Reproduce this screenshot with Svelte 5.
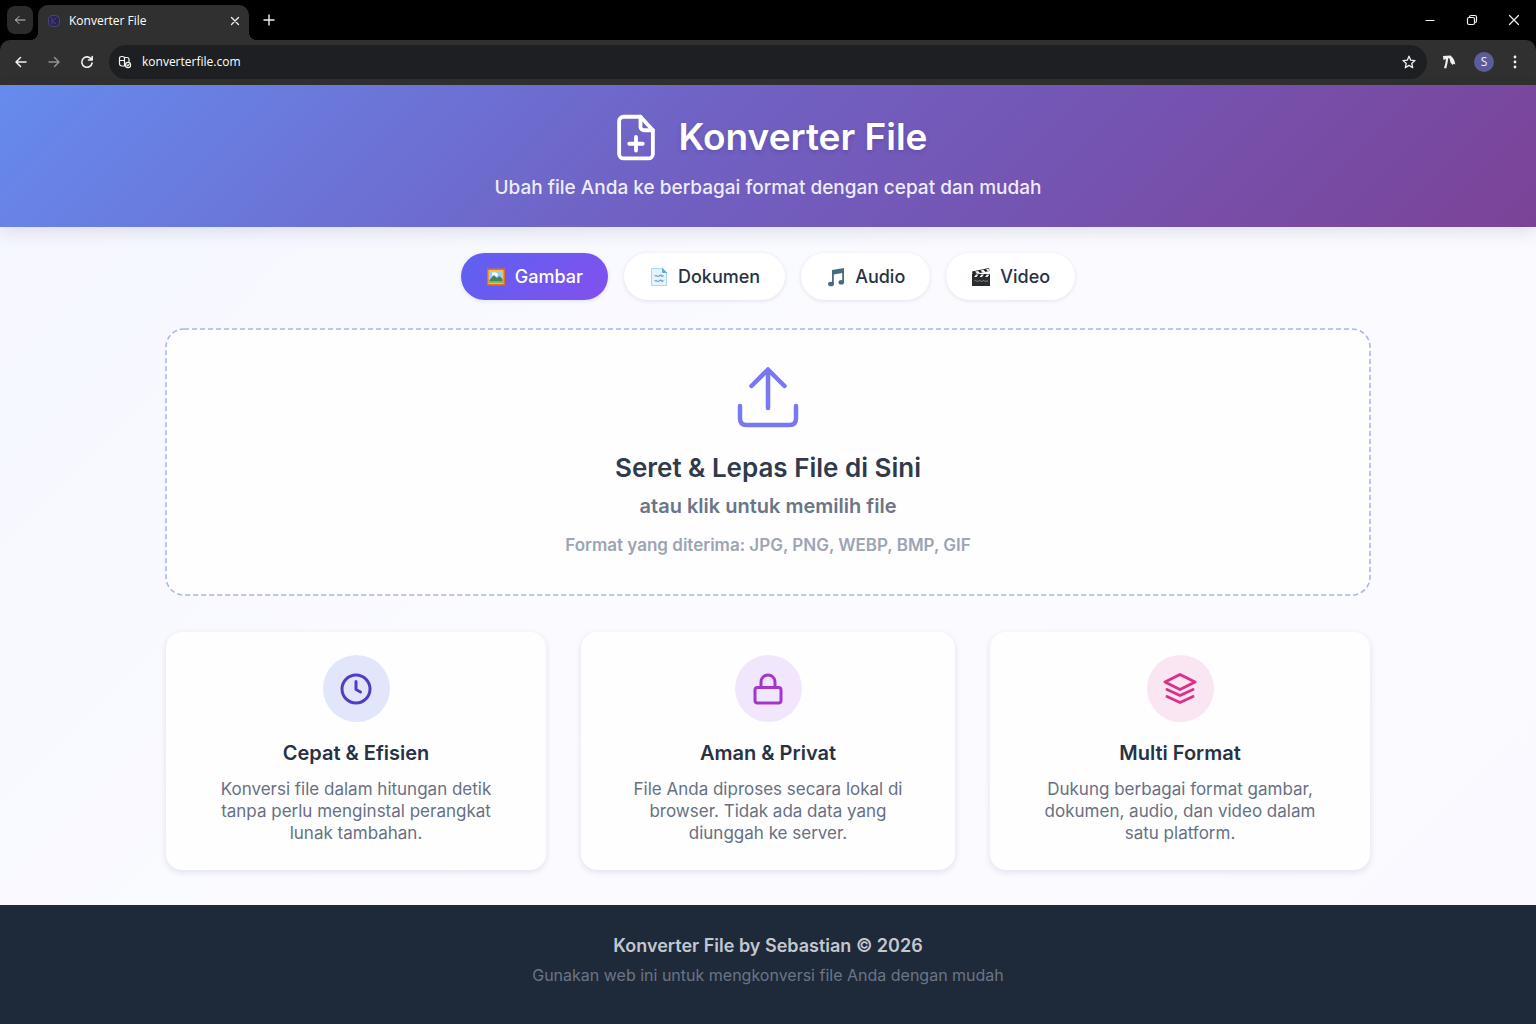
<script lang="ts">
  type Category = {
    id: string;
    label: string;
    formats: string[];
  };

  const categories: Category[] = [
    { id: "image", label: "Gambar", formats: ["JPG", "PNG", "WEBP", "BMP", "GIF"] },
    { id: "document", label: "Dokumen", formats: ["PDF", "DOCX", "TXT"] },
    { id: "audio", label: "Audio", formats: ["MP3", "WAV", "OGG"] },
    { id: "video", label: "Video", formats: ["MP4", "WEBM", "AVI"] },
  ];

  const features = [
    {
      icon: "clock",
      title: "Cepat & Efisien",
      text: "Konversi file dalam hitungan detik tanpa perlu menginstal perangkat lunak tambahan.",
    },
    {
      icon: "lock",
      title: "Aman & Privat",
      text: "File Anda diproses secara lokal di browser. Tidak ada data yang diunggah ke server.",
    },
    {
      icon: "layers",
      title: "Multi Format",
      text: "Dukung berbagai format gambar, dokumen, audio, dan video dalam satu platform.",
    },
  ];

  let active = $state("image");
  let url = $state("konverterfile.com");

  const current = $derived(categories.find((c) => c.id === active) ?? categories[0]);
</script>

<div class="browser">
  <div class="tab-bar">
    <button class="tab-search" aria-label="Cari tab">
      <svg width="12" height="12" viewBox="0 0 12 12"><path d="M11 6H1.5M5 2.5 1.5 6 5 9.500" /></svg>
    </button>
    <div class="tab">
      <svg class="favicon" width="14" height="14" viewBox="0 0 14 14">
        <rect x="1.5" y="1.5" width="11" height="11" rx="4" />
        <path d="M5 4v6M9 4 5.5 7 9 10" />
      </svg>
      <span class="tab-title">Konverter File</span>
      <button class="bare" aria-label="Tutup tab">
        <svg width="10" height="10" viewBox="0 0 10 10" stroke-width="1.3"><path d="m1.5 1.5 7 7M8.5 1.5l-7 7" /></svg>
      </button>
    </div>
    <button class="bare new-tab" aria-label="Tab baru">
      <svg width="12" height="12" viewBox="0 0 12 12" stroke-width="1.4"><path d="M6 1v10M1 6h10" /></svg>
    </button>
    <div class="window-controls">
      <button class="bare" aria-label="Minimalkan">
        <svg width="12" height="12" viewBox="0 0 12 12" stroke-width="1.2"><path d="M2 6.5h8" /></svg>
      </button>
      <button class="bare" aria-label="Pulihkan">
        <svg width="12" height="12" viewBox="0 0 12 12" stroke-width="1.2">
          <rect x="1.5" y="3.5" width="7" height="7" rx="1.5" />
          <path d="M3.5 3.5V3q0-1.5 1.500-1.500h4q1.500 0 1.500 1.500v4q0 1.500-1.500 1.500h-.5" />
        </svg>
      </button>
      <button class="bare" aria-label="Tutup">
        <svg width="12" height="12" viewBox="0 0 12 12" stroke-width="1.2"><path d="m1.5 1.5 9 9M10.5 1.5l-9 9" /></svg>
      </button>
    </div>
  </div>

  <div class="toolbar">
    <button class="bare" aria-label="Kembali">
      <svg width="14" height="14" viewBox="0 0 14 14" stroke-width="1.5"><path d="M12 7H2M6.500 2.500 2 7l4.500 4.500" /></svg>
    </button>
    <button class="bare dim" aria-label="Maju">
      <svg width="14" height="14" viewBox="0 0 14 14" stroke-width="1.5"><path d="M2 7h10M7.500 2.500 12 7l-4.500 4.500" /></svg>
    </button>
    <button class="bare" aria-label="Muat ulang">
      <svg width="14" height="14" viewBox="0 0 14 14" stroke-width="1.6">
        <path d="M11.500 4.500A5.200 5.200 0 1 0 12.100 8M12.200 1.500v3.500H8.500" />
      </svg>
    </button>
    <div class="address">
      <svg width="14" height="14" viewBox="0 0 14 14" stroke-width="1.2">
        <path d="M6.500 11H4Q1.500 11 1.500 8.500V3.500Q1.500 1.500 3.500 1.500h1q2 0 2 2V11M1.500 5.500h5M6.500 2.500H9q2 0 2 2V7" />
        <circle cx="10" cy="10" r="2.6" />
        <path d="m9 10 .8.8 1.300-1.500" />
      </svg>
      <input type="text" aria-label="Alamat" bind:value={url} />
      <button class="bare" aria-label="Tandai halaman">
        <svg width="14" height="14" viewBox="0 0 14 14" stroke-width="1.3">
          <path d="m7 1.200 1.700 4 4.300.4-3.300 2.800 1 4.300L7 10.400l-3.700 2.300 1-4.300L1 5.600l4.300-.4z" />
        </svg>
      </button>
    </div>
    <button class="bare" aria-label="Ekstensi">
      <svg class="solid" width="14" height="14" viewBox="0 0 14 14">
        <path d="M1 1 8.500.5l2.500 2.500 1.500 3 .8 3.500-1.600-.8L10.500 10 8.500 7.500 7.500 3.500 6.300 3 5.500 8 4.300 13.200H2L3.300 8.500 4 4 1.500 5z" />
      </svg>
    </button>
    <button class="avatar" aria-label="Profil S">S</button>
    <button class="bare" aria-label="Menu">
      <svg class="solid" width="4" height="14" viewBox="0 0 4 14">
        <circle cx="2" cy="2" r="1.4" /><circle cx="2" cy="7" r="1.4" /><circle cx="2" cy="12" r="1.4" />
      </svg>
    </button>
  </div>
</div>

<div class="page">
  <header>
    <div class="brand">
      <svg width="54" height="54" viewBox="0 0 24 24">
        <path d="M12 12v6M9 15h6" />
        <path d="M14 3H6.500a2 2 0 0 0-2 2v14.500a2 2 0 0 0 2 2h11a2 2 0 0 0 2-2V9z" />
        <path d="M14 3v4.500A1.500 1.500 0 0 0 15.500 9h4" />
      </svg>
      <h1>Konverter File</h1>
    </div>
    <p>Ubah file Anda ke berbagai format dengan cepat dan mudah</p>
  </header>

  <main>
    <nav aria-label="Kategori">
      {#each categories as category (category.id)}
        <button class="pill" class:active={active === category.id} onclick={() => (active = category.id)}>
          {#if category.id === "image"}
            <svg width="20" height="20" viewBox="0 0 20 20">
              <rect x="1" y="1.5" width="18" height="17" fill="#ef6c13" />
              <rect x="2.5" y="3" width="15" height="14" fill="#ffbd45" />
              <rect x="3.5" y="4" width="13" height="12" fill="#8fd3ee" />
              <path d="M6 5.500h4l2 2-1 2-3 .5-2-2z" fill="#fff" />
              <path d="M3.500 13 8 8l3 3 2.500-2 3 3v4h-13z" fill="#458265" />
              <path d="M3.500 14h13v2h-13z" fill="#84b848" />
            </svg>
          {:else if category.id === "document"}
            <svg width="20" height="20" viewBox="0 0 20 20">
              <path d="M2.500 1.500h11l4 4v13h-15z" fill="#e5f3fc" stroke="#add7ee" />
              <path d="M13.500 1.500v4h4z" fill="#68a7d2" stroke="#68a7d2" />
              <path d="M5.500 9q1.500-.8 2.500 0t2.500-.3 2 .3h2M5.500 14q1.500-.8 2.500 0t2.500-.3 2 .3h2" fill="none" stroke="#69a4cf" stroke-width="1.3" />
            </svg>
          {:else if category.id === "audio"}
            <svg width="20" height="20" viewBox="0 0 20 20" fill="#486b80">
              <path d="M6 3 18 1v14h-1.800V6L7.800 7.500V17H6z" />
              <ellipse cx="5" cy="17" rx="3" ry="2.3" />
              <ellipse cx="15.3" cy="15.3" rx="2.8" ry="2.3" />
            </svg>
          {:else}
            <svg width="20" height="20" viewBox="0 0 20 20">
              <path d="M1 7h18v12H1z" fill="#292d30" />
              <path d="M1 7h18v3H1zM1 4.500 18 1l.6 3L1.600 7.500z" fill="#202427" />
              <path d="m4 4.500 3-.6L9 6l-3 .6zM9.500 3.300l3-.6L14.500 5l-3 .6zM15 2.200l2.600-.5.8 2.300-1.400.3zM3 10l2-2.500h2.500l-2 2.500zM8.500 10l2-2.500H13L11 10zM14 10l2-2.500h2.500l-2 2.500z" fill="#f4f4f4" />
              <path d="M3.500 14q1-1 2 0t2 0 2 0 2 0 2 0 2 0h1.500" fill="none" stroke="#8e9498" />
            </svg>
          {/if}
          {category.label}
        </button>
      {/each}
    </nav>

    <label class="dropzone">
      <svg class="outline" width="100%" height="100%" aria-hidden="true">
        <rect width="100%" height="100%" rx="18" />
      </svg>
      <input type="file" class="file-input" multiple />
      <svg class="upload" width="64" height="64" viewBox="0 0 64 64">
        <path d="M32 43V5M15.500 21 32 4.500 48.500 21M4 41v12.500q0 6.500 6.500 6.500h43q6.500 0 6.500-6.500V41" />
      </svg>
      <span class="drop-title">Seret &amp; Lepas File di Sini</span>
      <span class="drop-hint">atau klik untuk memilih file</span>
      <span class="drop-formats">Format yang diterima: {current.formats.join(", ")}</span>
    </label>

    <section class="features">
      {#each features as feature (feature.icon)}
        <article class="card">
          <div class="badge {feature.icon}">
            <svg width="36" height="36" viewBox="0 0 36 36">
              {#if feature.icon === "clock"}
                <circle cx="18" cy="18" r="14" />
                <path d="M18 10.500v8l4.500 2.500" />
              {:else if feature.icon === "lock"}
                <rect x="5" y="16.5" width="26" height="15.5" rx="2.5" />
                <path d="M11 16.500V11a7 7 0 0 1 14 0v5.500" />
              {:else}
                <path d="M18 3.500 33 11l-15 7.500L3 11z" />
                <path d="m5 18.500 13 6 13-6M5 25.500l13 6 13-6" />
              {/if}
            </svg>
          </div>
          <h2>{feature.title}</h2>
          <p>{feature.text}</p>
        </article>
      {/each}
    </section>
  </main>

  <footer>
    <p class="credit">Konverter File by Sebastian © 2026</p>
    <p class="note">Gunakan web ini untuk mengkonversi file Anda dengan mudah</p>
  </footer>
</div>

<style>
  :global(body) {
    margin: 0;
    background: #1e293a;
  }

  :global(#app) {
    display: flex;
    flex-direction: column;
    min-height: 100vh;
  }

  button {
    font: inherit;
    color: inherit;
    border: none;
    cursor: pointer;
  }

  h1,
  h2,
  p {
    margin: 0;
  }

  /* BROWSER */
  .browser {
    background: #000;
    color: #f1f1f1;
    font-family: "Open Sans", sans-serif;
    font-size: 12px;
  }

  .browser svg {
    display: block;
    fill: none;
    stroke: currentColor;
    stroke-linecap: round;
    stroke-linejoin: round;
  }

  .browser svg.solid {
    fill: currentColor;
    stroke: none;
  }

  .bare {
    display: flex;
    background: none;
    padding: 0;
  }

  .dim {
    color: #919191;
  }

  .tab-bar {
    display: flex;
    align-items: center;
    height: 40px;
    padding: 0 16px 0 7px;
  }

  .tab-search {
    display: grid;
    place-items: center;
    width: 26px;
    height: 28px;
    padding: 0;
    border-radius: 8px;
    background: #2b2b2b;
    color: #c4c4c4;
  }

  .tab {
    position: relative;
    box-sizing: border-box;
    display: flex;
    align-items: center;
    align-self: flex-end;
    width: 211px;
    height: 35px;
    margin-left: 5px;
    padding: 0 9px 4px;
    border-radius: 10px 10px 0 0;
    background: #303030;
  }

  /* flared feet of the tab */
  .tab::before,
  .tab::after {
    content: "";
    position: absolute;
    bottom: 0;
    width: 8px;
    height: 8px;
  }

  .tab::before {
    right: 100%;
    background: radial-gradient(circle at 0 0, transparent 8px, #303030 8px);
  }

  .tab::after {
    left: 100%;
    background: radial-gradient(circle at 100% 0, transparent 8px, #303030 8px);
  }

  .browser svg.favicon {
    stroke: #4b438b;
    fill: #28264a;
  }

  .tab-title {
    flex: 1;
    margin-left: 8px;
    color: #fff;
  }

  .new-tab {
    margin-left: 14px;
  }

  .window-controls {
    display: flex;
    gap: 30px;
    margin-left: auto;
  }

  .toolbar {
    display: flex;
    align-items: center;
    height: 43px;
    padding: 0 19px 2px 14px;
    gap: 19px;
    border-radius: 10px 10px 0 0;
    background: #303030;
  }

  .address {
    flex: 1;
    display: flex;
    align-items: center;
    height: 34px;
    margin-left: -4px;
    margin-right: -4px;
    padding: 0 11px 0 9px;
    border-radius: 17px;
    background: #1d1f22;
  }

  .address input {
    flex: 1;
    min-width: 0;
    margin-left: 10px;
    padding: 0;
    border: none;
    outline: none;
    background: none;
    color: #fff;
    font: inherit;
  }

  .avatar {
    width: 20px;
    height: 20px;
    margin-left: -1px;
    padding: 0;
    border-radius: 50%;
    background: #5c5c9a;
    line-height: 20px;
  }

  /* PAGE */
  .page {
    flex: 1;
    display: flex;
    flex-direction: column;
    font-family: Inter, sans-serif;
    text-align: center;
    background: linear-gradient(135deg, #f5f7ff 0%, #fbfbff 50%, #f9f9ff 100%);
  }

  header {
    padding: 24px 24px 27px;
    color: #fff;
    background: linear-gradient(135deg, #668bee 0%, #7061c3 45%, #7553b0 70%, #7b4397 100%);
    box-shadow: 0 6px 16px rgba(40, 40, 90, 0.12);
  }

  .brand {
    display: flex;
    align-items: center;
    justify-content: center;
    gap: 16px;
  }

  .brand svg {
    fill: none;
    stroke: currentColor;
    stroke-width: 1.7;
    stroke-linecap: round;
    stroke-linejoin: round;
  }

  h1 {
    font-size: 37px;
    font-weight: 600;
    line-height: 56px;
    text-shadow: 0 2px 4px rgba(40, 30, 100, 0.2);
  }

  header p {
    margin-top: 11px;
    font-size: 19px;
    font-weight: 500;
    line-height: 24px;
    color: #eeecfb;
  }

  main {
    width: calc(100% - 48px);
    max-width: 1204px;
    margin: 0 auto;
    padding: 26px 0 35px;
  }

  nav {
    display: flex;
    flex-wrap: wrap;
    justify-content: center;
    gap: 16px;
  }

  .pill {
    display: flex;
    align-items: center;
    gap: 9px;
    height: 47px;
    padding: 0 25px;
    border-radius: 24px;
    background: #fff;
    color: #273244;
    font-size: 18px;
    font-weight: 500;
    box-shadow: 0 1px 4px rgba(40, 50, 90, 0.12);
  }

  .pill.active {
    color: #fff;
    background: linear-gradient(135deg, #5d61f1, #8350ee);
  }

  .dropzone {
    position: relative;
    display: flex;
    flex-direction: column;
    align-items: center;
    margin-top: 29px;
    padding: 36px 24px 38px;
    border-radius: 18px;
    background: #fefeff;
    cursor: pointer;
  }

  .outline {
    position: absolute;
    inset: 0;
    overflow: visible;
    fill: none;
    stroke: #a5b4f4;
    stroke-width: 1.5;
    stroke-dasharray: 5 3;
  }

  .file-input {
    position: absolute;
    inset: 0;
    width: 100%;
    opacity: 0;
    cursor: pointer;
  }

  .upload {
    fill: none;
    stroke: #7778f2;
    stroke-width: 4.5;
    stroke-linecap: round;
    stroke-linejoin: round;
  }

  .drop-title {
    margin-top: 23px;
    font-size: 26px;
    font-weight: 600;
    line-height: 32px;
    color: #303a4b;
  }

  .drop-hint {
    margin-top: 8px;
    font-size: 20px;
    font-weight: 600;
    line-height: 28px;
    color: #6b7588;
  }

  .drop-formats {
    margin-top: 13px;
    font-size: 17px;
    font-weight: 600;
    line-height: 24px;
    color: #9da4b2;
  }

  .features {
    display: grid;
    grid-template-columns: 380fr 374fr 380fr;
    gap: 35px;
    margin-top: 37px;
  }

  .card {
    display: flex;
    flex-direction: column;
    align-items: center;
    padding: 23px 48px 26px;
    border-radius: 16px;
    background: #fefeff;
    box-shadow: 0 2px 6px rgba(40, 50, 90, 0.13);
  }

  .badge {
    display: grid;
    place-items: center;
    width: 67px;
    height: 67px;
    border-radius: 50%;
  }

  .badge svg {
    fill: none;
    stroke: currentColor;
    stroke-width: 3;
    stroke-linecap: round;
    stroke-linejoin: round;
  }

  .clock {
    color: #503fc5;
    background: #e1e6fb;
  }

  .lock {
    color: #a138cb;
    background: #f2e6fc;
  }

  .layers {
    color: #d93289;
    background: #fae5f2;
  }

  h2 {
    margin-top: 19px;
    font-size: 20px;
    font-weight: 600;
    line-height: 24px;
    color: #273244;
  }

  .card p {
    max-width: 290px;
    margin-top: 13px;
    font-size: 17px;
    line-height: 22px;
    color: #677083;
  }

  footer {
    flex: 1;
    padding: 29px 24px 32px;
    background: #1e293a;
  }

  .credit {
    font-size: 18px;
    font-weight: 600;
    line-height: 24px;
    color: #c2c7d0;
  }

  .note {
    margin-top: 5px;
    font-size: 16px;
    line-height: 24px;
    color: #6b7585;
  }
</style>
